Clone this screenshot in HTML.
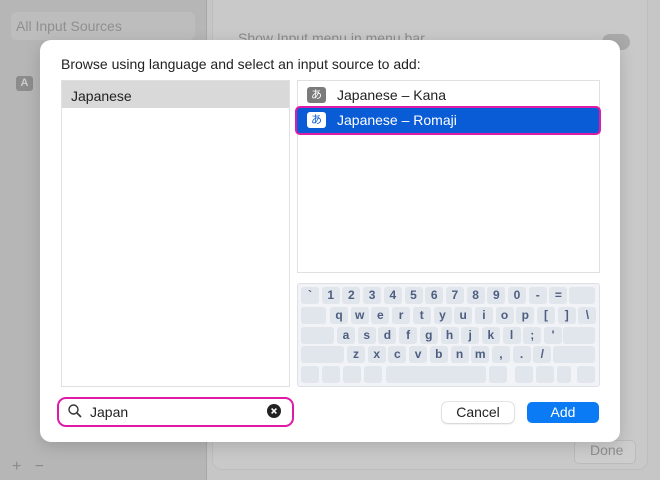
<!DOCTYPE html>
<html><head><meta charset="utf-8"><style>
*{box-sizing:border-box;margin:0;padding:0}
body{width:660px;height:480px;overflow:hidden;background:#b4b4b4;font-family:"Liberation Sans","Noto Sans CJK JP",sans-serif;position:relative}
.abs{position:absolute}
.side{left:0;top:0;width:207px;height:480px;background:#b6b6b6;border-right:1px solid #a8a8a8}
.main{left:207px;top:0;width:453px;height:480px;background:#c6c6c6}
.grp{left:212px;top:-10px;width:436px;height:480px;background:#c9c9c9;border-radius:10px;border:1px solid #bdbdbd}
.dlg{left:40px;top:40px;width:580px;height:402px;background:#fff;border-radius:11px;box-shadow:0 4px 16px rgba(0,0,0,.15)}
.key{position:absolute;height:17px;background:#e1e5ec;border-radius:3px;color:#4d5e80;font-weight:bold;font-size:12px;text-align:center;line-height:17px}
.kb{left:297px;top:283px;width:303px;height:104px;background:#f1f3f6;border:1px solid #dde0e5;border-radius:3px}
</style></head><body>
<div class="abs side"></div>
<div class="abs main"></div>
<div class="abs grp"></div>
<div class="abs" style="left:11px;top:12px;width:184px;height:28px;background:#bdbdbd;border-radius:6px"></div>
<div class="abs" style="left:16px;top:18px;font-size:14px;color:#8f8f8f">All Input Sources</div>
<div class="abs" style="left:16px;top:76px;width:17px;height:15px;background:#8c8c8c;border-radius:3px;color:#ccc;font-size:11px;font-weight:bold;text-align:center;line-height:15px">A</div>
<div class="abs" style="left:238px;top:30px;font-size:14px;color:#8a8a8a">Show Input menu in menu bar</div>
<div class="abs" style="left:602px;top:34px;width:28px;height:16px;border-radius:8px;background:#aaa"></div>
<div class="abs" style="left:12px;top:458px;font-size:16px;color:#8a8a8a">+&nbsp;&nbsp;&nbsp;−</div>
<div class="abs" style="left:574px;top:440px;width:62px;height:24px;border-radius:5px;background:#cdcdcd;border:1px solid #bbb"></div>
<div class="abs" style="left:590px;top:442px;color:#8e8e8e;font-size:14px">Done</div>
<div class="abs dlg"></div>
<div class="abs" style="left:61px;top:56px;font-size:14px;color:#222">Browse using language and select an input source to add:</div>
<div class="abs" style="left:61px;top:80px;width:229px;height:307px;border:1px solid #e0e0e0;background:#fff"></div>
<div class="abs" style="left:62px;top:81px;width:227px;height:27px;background:#d9d9d9"></div>
<div class="abs" style="left:71px;top:88px;font-size:14px;color:#222">Japanese</div>
<div class="abs" style="left:297px;top:80px;width:303px;height:193px;border:1px solid #e0e0e0;background:#fff"></div>
<div class="abs" style="left:307px;top:87px;width:19px;height:16px;background:#7b7b7b;border-radius:3px;color:#fff;font-size:11px;text-align:center;line-height:16px">あ</div>
<div class="abs" style="left:337px;top:87px;font-size:14px;color:#222">Japanese – Kana</div>
<div class="abs" style="left:295px;top:106px;width:306px;height:29px;background:#0a5bd6;border:2px solid #e01aa6;border-radius:5px"></div>
<div class="abs" style="left:307px;top:112px;width:19px;height:16px;background:#fff;border-radius:3px;color:#0a5bd6;font-size:11px;text-align:center;line-height:16px">あ</div>
<div class="abs" style="left:337px;top:112px;font-size:14px;color:#fff">Japanese – Romaji</div>
<div class="abs kb"></div>
<div id="k"></div>
<div class="abs" style="left:57px;top:397px;width:237px;height:30px;border:2px solid #e01aa6;border-radius:9px"></div>
<svg class="abs" style="left:68px;top:404px" width="14" height="14"><circle cx="5.5" cy="5.5" r="4.5" fill="none" stroke="#333" stroke-width="1.4"/><path d="M9 9l4 4" stroke="#333" stroke-width="1.6"/></svg>
<div class="abs" style="left:90px;top:404px;font-size:14px;color:#222">Japan</div>
<svg class="abs" style="left:267px;top:404px" width="14" height="14"><circle cx="7" cy="7" r="7" fill="#222"/><path d="M4.6 4.6l4.8 4.8M9.4 4.6l-4.8 4.8" stroke="#fff" stroke-width="1.6"/></svg>
<div class="abs" style="left:442px;top:402px;width:72px;height:21px;border-radius:5px;background:#fff;box-shadow:0 0 0 .5px #ccc,0 1px 2px rgba(0,0,0,.15);font-size:14px;color:#222;text-align:center;line-height:21px">Cancel</div>
<div class="abs" style="left:527px;top:402px;width:72px;height:21px;border-radius:5px;background:#0a7bf5;font-size:14px;color:#fff;text-align:center;line-height:21px">Add</div>
<script>
var rows=[
 [301,287,["`","1","2","3","4","5","6","7","8","9","0","-","="],[569,26]],
 [330,307,["q","w","e","r","t","y","u","i","o","p","[","]","\\"],null,[301,25]],
 [337,327,["a","s","d","f","g","h","j","k","l",";","'"],[563,32],[301,33]],
 [347,346,["z","x","c","v","b","n","m",",",".","/"],[553,42],[301,43]]];
var h="",p=20.7;
rows.forEach(function(r){r[2].forEach(function(c,i){h+='<div class="key" style="left:'+(r[0]+i*p).toFixed(1)+'px;top:'+r[1]+'px;width:18px">'+c+'</div>'});
if(r[3])h+='<div class="key" style="left:'+r[3][0]+'px;top:'+r[1]+'px;width:'+r[3][1]+'px"></div>';
if(r[4])h+='<div class="key" style="left:'+r[4][0]+'px;top:'+r[1]+'px;width:'+r[4][1]+'px"></div>';});
[[301,18],[322,18],[343,18],[364,18],[386,100],[489,18],[515,18],[536,18],[557,14],[577,18]].forEach(function(k){h+='<div class="key" style="left:'+k[0]+'px;top:366px;width:'+k[1]+'px"></div>'});
document.getElementById('k').innerHTML=h;
</script>
</body></html>
